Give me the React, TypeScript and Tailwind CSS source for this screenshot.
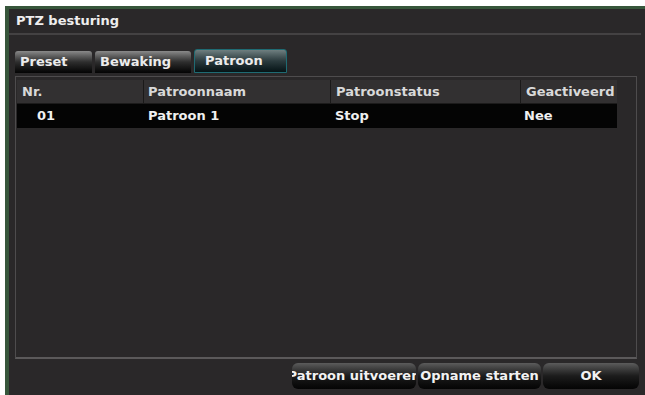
import React from "react"

const font = { fontFamily: '"DejaVu Sans", Verdana, sans-serif' }

const columns = [
  { label: "Nr.", w: "w-[126px]", pad: "pl-[5px]" },
  { label: "Patroonnaam", w: "w-[187px]", pad: "pl-[4px]" },
  { label: "Patroonstatus", w: "w-[190px]", pad: "pl-[5px]" },
  { label: "Geactiveerd", w: "w-[97px]", pad: "pl-[5px]" },
]

const rows = [{ nr: "01", name: "Patroon 1", status: "Stop", active: "Nee" }]

function Tab({ label, active, w }: { label: string; active?: boolean; w: string }) {
  return (
    <div
      className={
        "h-[22px] flex items-center rounded-t-[3px] text-[13px] font-bold text-[#ececec] " +
        w +
        (active
          ? " border border-[#1f6b73] bg-gradient-to-b from-[#6f7f80] via-[#2b3b3e] to-[#061416] pl-[10px] h-[24px]"
          : " bg-gradient-to-b from-[#8a8a8a] via-[#2e2e2e] to-[#050505] pl-[5px]")
      }
    >
      {label}
    </div>
  )
}

function Btn({ label, w }: { label: string; w: string }) {
  return (
    <div
      className={
        "h-[26px] flex items-center justify-center overflow-hidden whitespace-nowrap rounded-[6px] text-[13px] font-bold text-[#f2f2f2] bg-gradient-to-b from-[#5c5c5c] via-[#1c1c1c] to-[#050505] " +
        w
      }
    >
      {label}
    </div>
  )
}

export default function App() {
  return (
    <div className="w-[645px] h-[395px] bg-white overflow-hidden pt-[6px] pl-[5px]" style={font}>
      <div className="w-[648px] h-[400px] border-l-[4px] border-t-[3px] border-[#37563b] bg-[#2a2829] flex flex-col">
        {/* title */}
        <div className="h-[24px] flex items-center pl-[7px] text-[13px] font-bold text-[#eeeeee]">
          PTZ besturing
        </div>
        <div className="h-[2px] w-[632px] bg-[#444243]" />

        {/* tabs */}
        <div className="mt-[13px] ml-[6px] flex items-end gap-[3px] h-[25px]">
          <Tab label="Preset" w="w-[77px]" />
          <Tab label="Bewaking" w="w-[96px]" />
          <Tab label="Patroon" active w="w-[93px]" />
        </div>

        {/* table */}
        <div className="mt-[3px] ml-[6px] w-[622px] h-[283px] border border-[#4e4c4d] border-b-2 border-b-[#5b595a] pt-[3px] pl-[1px]">
          <div className="flex h-[24px] w-[600px] bg-[#323031] border-b border-[#1c1b1b]">
            {columns.map((c, i) => (
              <div
                key={c.label}
                className={
                  "flex items-center text-[13px] font-bold text-[#d9d9d9] " +
                  c.w +
                  " " +
                  c.pad +
                  (i > 0 ? " border-l border-[#1a1919]" : "")
                }
              >
                {c.label}
              </div>
            ))}
          </div>
          {rows.map((r) => (
            <div key={r.nr} className="flex h-[24px] w-[600px] bg-[#040404] text-[13px] font-bold text-[#f0f0f0]">
              <div className="w-[126px] pl-[20px] flex items-center">{r.nr}</div>
              <div className="w-[187px] pl-[5px] flex items-center">{r.name}</div>
              <div className="w-[190px] pl-[5px] flex items-center">{r.status}</div>
              <div className="w-[97px] pl-[4px] flex items-center">{r.active}</div>
            </div>
          ))}
        </div>

        {/* buttons */}
        <div className="mt-[4px] ml-[283px] flex gap-[2px]">
          <Btn label="Patroon uitvoeren" w="w-[124px]" />
          <Btn label="Opname starten" w="w-[123px]" />
          <Btn label="OK" w="w-[96px]" />
        </div>
      </div>
    </div>
  )
}
